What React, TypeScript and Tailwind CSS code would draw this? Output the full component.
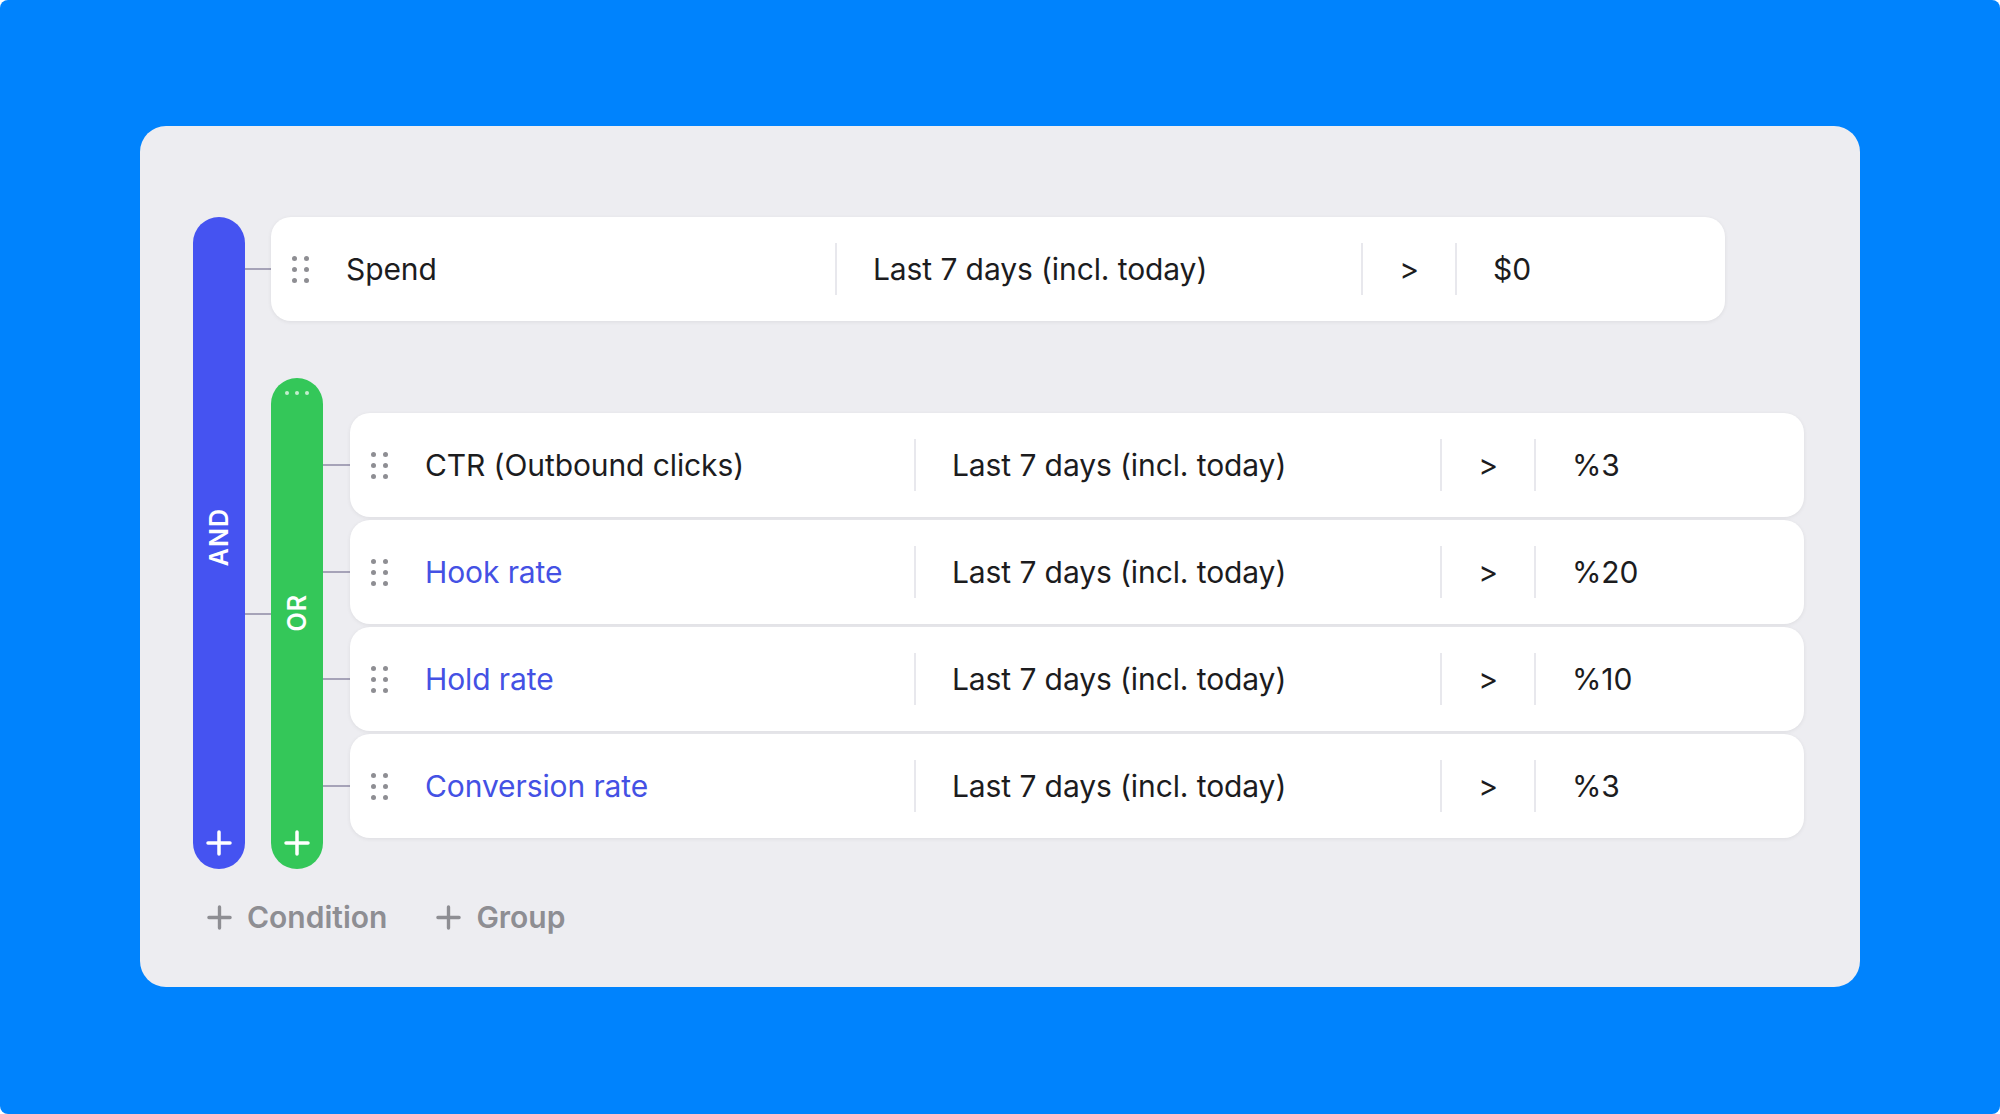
import React from 'react';

interface Condition {
  name: string;
  link?: boolean;
  value: string;
}

const orConditions: Condition[] = [
  { name: 'CTR (Outbound clicks)', value: '%3' },
  { name: 'Hook rate', link: true, value: '%20' },
  { name: 'Hold rate', link: true, value: '%10' },
  { name: 'Conversion rate', link: true, value: '%3' },
];

const PlusIcon: React.FC<{ className?: string; strokeWidth?: number }> = ({ className, strokeWidth = 3.5 }) => (
  <svg viewBox="0 0 26 26" className={className} fill="none" stroke="currentColor" strokeWidth={strokeWidth} strokeLinecap="round">
    <path d="M13 2v22M2 13h22" />
  </svg>
);

const DragHandle = () => (
  <div className="grid grid-cols-2 gap-x-[7px] gap-y-[6px] w-[16px]">
    {Array.from({ length: 6 }).map((_, i) => (
      <span key={i} className="block w-[5px] h-[5px] rounded-full bg-[#8e8e93]" />
    ))}
  </div>
);

const Divider = () => <div className="w-[2px] h-[52px] bg-[#e8e8ed] shrink-0" />;

const Connector: React.FC<{ width: string; className?: string }> = ({ width, className = '' }) => (
  <div className={`${width} h-[2px] bg-[#a6a3b8] shrink-0 ${className}`} />
);

const ConditionRow: React.FC<Condition> = ({ name, link, value }) => (
  <div className="flex items-center w-[1454px] h-[104px] bg-white rounded-[20px] shadow-[0_1px_4px_rgba(0,0,0,0.07)]">
    <div className="ml-[21px]">
      <DragHandle />
    </div>
    <div className={`ml-[38px] w-[489px] ${link ? 'text-[#4451e4]' : 'text-[#1c1c1e]'}`}>{name}</div>
    <Divider />
    <div className="pl-[36px] w-[524px] text-[#1c1c1e]">Last 7 days (incl. today)</div>
    <Divider />
    <div className="w-[92px] text-center text-[#1c1c1e]">&gt;</div>
    <Divider />
    <div className="pl-[36px] flex-1 text-[#1c1c1e]">{value}</div>
  </div>
);

export default function App() {
  return (
    <div className="w-[2000px] h-[1114px] bg-white" style={{ fontFamily: 'Inter, "Noto Sans", sans-serif' }}>
      <div className="w-full h-full bg-[#0083fd] rounded-[8px] pt-[126px] pl-[140px]">
        <div className="w-[1720px] h-[861px] rounded-[26px] bg-[#ededf1] pl-[53px] pt-[91px]">
          <div className="flex text-[30px] leading-[40px] tracking-[-0.1px]">
            {/* AND bar */}
            <div className="w-[52px] h-[652px] rounded-full bg-[#4553f1] flex flex-col items-center text-white shrink-0">
              <div className="flex-1 flex items-center justify-center pt-[28px]">
                <span className="[writing-mode:vertical-rl] rotate-180 text-[25px] leading-none font-semibold tracking-[1px]">AND</span>
              </div>
              <PlusIcon className="w-[26px] h-[26px] mb-[13px]" />
            </div>

            <div className="flex flex-col">
              {/* Spend */}
              <div className="flex items-center">
                <Connector width="w-[26px]" />
                <ConditionRow name="Spend" value="$0" />
              </div>

              {/* OR group */}
              <div className="flex items-start mt-[57px]">
                <Connector width="w-[26px]" className="mt-[235px]" />
                <div className="w-[52px] h-[491px] rounded-full bg-[#34c759] flex flex-col items-center text-white shrink-0">
                  <div className="flex gap-[6px] mt-[13px]">
                    <span className="w-[4px] h-[4px] rounded-full bg-white/70" />
                    <span className="w-[4px] h-[4px] rounded-full bg-white/70" />
                    <span className="w-[4px] h-[4px] rounded-full bg-white/70" />
                  </div>
                  <div className="flex-1 flex items-center justify-center">
                    <span className="[writing-mode:vertical-rl] rotate-180 text-[25px] leading-none font-semibold tracking-[1px]">OR</span>
                  </div>
                  <PlusIcon className="w-[26px] h-[26px] mb-[13px]" />
                </div>
                <div className="flex flex-col gap-[3px] pt-[35px]">
                  {orConditions.map((c) => (
                    <div key={c.name} className="flex items-center">
                      <Connector width="w-[27px]" />
                      <ConditionRow {...c} />
                    </div>
                  ))}
                </div>
              </div>
            </div>
          </div>

          {/* Footer actions */}
          <div className="flex items-center mt-[28px] ml-[14px] text-[30px] leading-[40px] font-semibold text-[#8e8e93]">
            <button className="flex items-center gap-[15px]">
              <PlusIcon className="w-[25px] h-[25px]" strokeWidth={3.5} />
              <span>Condition</span>
            </button>
            <button className="flex items-center gap-[15px] ml-[49px]">
              <PlusIcon className="w-[25px] h-[25px]" strokeWidth={3.5} />
              <span>Group</span>
            </button>
          </div>
        </div>
      </div>
    </div>
  );
}
